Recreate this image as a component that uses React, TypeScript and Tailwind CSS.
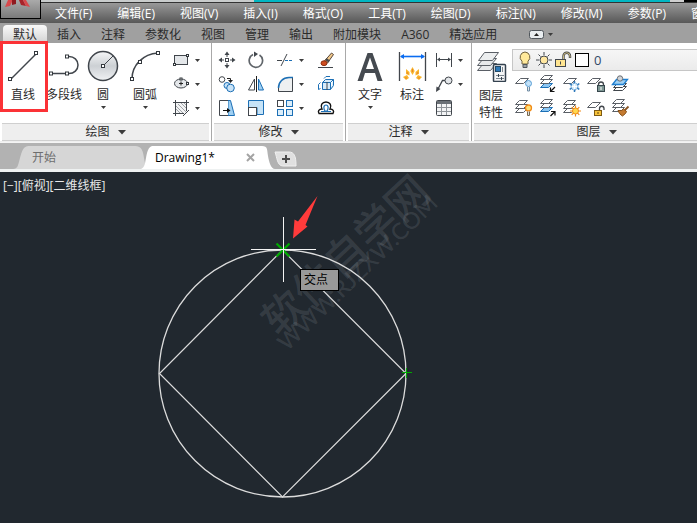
import type { ReactNode } from 'react';

const menus = ['文件(F)', '编辑(E)', '视图(V)', '插入(I)', '格式(O)', '工具(T)', '绘图(D)', '标注(N)', '修改(M)', '参数(P)', '窗口(W)'];
const ribbonTabs = ['默认', '插入', '注释', '参数化', '视图', '管理', '输出', '附加模块', 'A360', '精选应用'];

const INK = '#41464c';
const BLUE = '#1c6fb5';

function Icon({ children, size = 20 }: { children: ReactNode; size?: number }) {
  return (
    <svg width={size} height={size} viewBox={`0 0 ${size} ${size}`} fill="none" stroke={INK} className="block shrink-0" aria-hidden="true">
      {children}
    </svg>
  );
}

// Little square grip used on most drawing icons
function Grip({ x, y, r = 1.5 }: { x: number; y: number; r?: number }) {
  return <rect x={x - r} y={y - r} width={r * 2} height={r * 2} fill="#fff" stroke="#33383d" />;
}

function Caret({ big = false }: { big?: boolean }) {
  return big ? (
    <svg width="8" height="5" viewBox="0 0 8 5" className="block shrink-0" aria-hidden="true">
      <path d="M0 0h8L4 4.500z" fill="#3c3c3c" />
    </svg>
  ) : (
    <svg width="5" height="3" viewBox="0 0 5 3" className="block shrink-0" aria-hidden="true">
      <path d="M0 0h5L2.500 3z" fill="#3c3c3c" />
    </svg>
  );
}

interface BigButtonProps {
  label: string;
  width: string;
  caret?: boolean;
  children: ReactNode;
}

function BigButton({ label, width, caret, children }: BigButtonProps) {
  return (
    <button type="button" className={`flex shrink-0 flex-col items-center ${width}`}>
      {children}
      <span className="mt-[5px] whitespace-nowrap leading-4">{label}</span>
      {caret && (
        <span className="mt-[3px]">
          <Caret />
        </span>
      )}
    </button>
  );
}

function Tool({ name, caret, children }: { name: string; caret?: boolean; children: ReactNode }) {
  return (
    <button type="button" aria-label={name} className="flex h-6 items-center gap-1">
      <Icon>{children}</Icon>
      {caret && <Caret />}
    </button>
  );
}

function Panel({ title, className = '', children }: { title: string; className?: string; children: ReactNode }) {
  return (
    <section className={`flex shrink-0 flex-col border-r border-[#a9a9a9] bg-white ${className}`}>
      <div className="relative flex h-20 pt-[5px]">{children}</div>
      <button type="button" className="mx-0.5 flex h-[18px] items-center justify-center gap-2 border-y border-[#cfcfcf] bg-[#eeeeee]">
        {title}
        <Caret big />
      </button>
    </section>
  );
}

// Stack of sheets, the base of most layer icons
function Sheets({ x = 0, y = 0, accent = false }: { x?: number; y?: number; accent?: boolean }) {
  return (
    <g transform={`translate(${x} ${y})`} stroke="#5a5f66">
      <path d="M1.500 12.500l4-4h8l-4 4z" fill={accent ? '#8cc6f2' : '#fff'} stroke={accent ? BLUE : '#5a5f66'} />
      <path d="M1.500 8.500l4-4h8l-4 4z" fill="#fff" />
      <path d="M1.500 4.500l4-4h8l-4 4z" fill="#fff" />
    </g>
  );
}

function Sheet() {
  return <path d="M1.500 9.500l5-5h8l-5 5z" fill="#fff" stroke="#5a5f66" />;
}

function DrawPanel() {
  return (
    <Panel title="绘图" className="w-[212px]">
      <BigButton label="直线" width="w-[46px]">
        <Icon size={34}>
          <path d="M5 31L30 6" strokeWidth="1.500" />
          <Grip x={30} y={5} />
          <Grip x={4} y={31} />
        </Icon>
      </BigButton>
      <BigButton label="多段线" width="w-9">
        <Icon size={34}>
          <path d="M4 25.500h16M20 8.500h2c5 0 9 3.500 9 8.500s-4 8.500-9 8.500h-2" strokeWidth="1.500" />
          <Grip x={20} y={8.5} />
          <Grip x={4} y={25.5} />
          <Grip x={20} y={25.5} />
        </Icon>
      </BigButton>
      <BigButton label="圆" width="w-[42px]" caret>
        <Icon size={34}>
          <defs>
            <linearGradient id="disc" x1="0" y1="0" x2="0" y2="1">
              <stop offset="0" stopColor="#f6f7f8" />
              <stop offset="0.500" stopColor="#ccd0d4" />
              <stop offset="1" stopColor="#f0f2f4" />
            </linearGradient>
          </defs>
          <circle cx="17" cy="18" r="14.500" fill="url(#disc)" strokeWidth="1.500" />
          <path d="M17 18L27 8" />
          <Grip x={17} y={18} />
        </Icon>
      </BigButton>
      <BigButton label="圆弧" width="w-[42px]" caret>
        <Icon size={34}>
          <path d="M4 31C4 17 15 6 30 5" strokeWidth="1.500" />
          <Grip x={30} y={5} />
          <Grip x={12} y={14} />
          <Grip x={4} y={31} />
        </Icon>
      </BigButton>
      <div className="ml-[5px] flex flex-col">
        <Tool name="矩形" caret>
          <rect x="3.500" y="5.500" width="13" height="9" fill="#e4e7ea" />
          <Grip x={16.5} y={5.5} r={1} />
          <Grip x={3.5} y={14.5} r={1} />
        </Tool>
        <Tool name="椭圆" caret>
          <ellipse cx="10" cy="9.500" rx="6.500" ry="4.500" fill="#e4e7ea" />
          <path d="M8 9.500h4M10 7.500v4" stroke="#222" />
          <Grip x={10} y={5} r={1} />
          <Grip x={16.5} y={9.5} r={1} />
        </Tool>
        <Tool name="图案填充" caret>
          <rect x="4.500" y="4.500" width="11" height="11" fill="#f2f3f4" stroke="none" />
          <path d="M5 8l7 7M5 11l4 4M7 6l8 8M10 5l5 5M13 5l2 2" stroke="#8a8f94" strokeWidth="0.800" />
          <path d="M2 4.500h16M2 15.500h11M4.500 2v16M15.500 2v11M12 18l6-6" />
        </Tool>
      </div>
      <span className="pointer-events-none absolute -top-0.5 left-0 h-[71px] w-12 border-[3px] border-[#fb3236]" />
    </Panel>
  );
}

function ModifyPanel() {
  return (
    <Panel title="修改" className="w-[134px]">
      <div className="ml-[5px] grid grid-cols-[29px_29px_41px_20px] content-start">
        <Tool name="移动">
          <rect x="8.500" y="8.500" width="3" height="3" />
          <path d="M10 7V4M10 13v3M7 10H4M13 10h3" />
          <path d="M10 1.500L7.500 5h5zM10 18.500L7.500 15h5zM1.500 10L5 7.500v5zM18.500 10L15 7.500v5z" fill={INK} stroke="none" />
        </Tool>
        <Tool name="旋转">
          <path d="M13.500 5A6.700 6.700 0 1 1 7 4.600" stroke="#60656a" strokeWidth="1.700" />
          <path d="M8 1.500V7l4-3z" fill={INK} stroke="none" />
        </Tool>
        <Tool name="修剪" caret>
          <path d="M2 10.500h5M6 16l6-12" />
          <path d="M10 10.500h8" stroke={BLUE} strokeDasharray="3 1" />
        </Tool>
        <Tool name="删除">
          <path d="M2 17.500h15" />
          <path d="M8.500 11l7-8 2 1.500-6 8.500z" fill="#f2c98a" stroke="#57463a" />
          <path d="M9 10l1.500-2 3.500 2.500-1.500 2z" fill="#4a4a4a" stroke="none" />
          <ellipse cx="8" cy="13.200" rx="3" ry="2.400" fill="#cf4d20" stroke="#8d3112" />
        </Tool>
        <Tool name="复制">
          <circle cx="5" cy="5.500" r="2.800" />
          <path d="M10 4.500h3.500V7" stroke="#222" />
          <path d="M11 6h5l-2.500 3z" fill="#222" stroke="none" />
          <circle cx="10" cy="11.500" r="3" fill="#c9e3f7" stroke={BLUE} />
          <circle cx="13.500" cy="14" r="3.800" fill="#c9e3f7" stroke={BLUE} />
        </Tool>
        <Tool name="镜像">
          <path d="M8.500 5v11h-6z" />
          <path d="M10.500 2v16" stroke="#222" />
          <path d="M12.500 5v11h5z" fill="#9fd0f3" stroke={BLUE} />
        </Tool>
        <Tool name="圆角" caret>
          <path d="M3.500 17.500v-4a10 10 0 0 1 10-10h4v14z" fill="#eef0f1" stroke="none" />
          <path d="M17.500 4v13.500H3.500V14" />
          <path d="M3.500 14C3.500 8 8 3.500 14 3.500h4" stroke={BLUE} strokeWidth="1.500" />
        </Tool>
        <Tool name="分解">
          <path d="M6.500 8.500h8v7h-8zM6.500 8.500l3-3h8l-3 3M17.500 5.500v6l-3 4" fill="#d7ecfb" stroke={BLUE} />
          <path d="M4.500 8.500l-2 2v5l2-1M8 4.500l2-2h4" stroke={BLUE} />
          <path d="M11 8v8" stroke={INK} />
        </Tool>
        <Tool name="拉伸">
          <path d="M11 2.500h2.500l4 15H11z" fill="#9fd0f3" stroke={BLUE} />
          <path d="M11 2.500H2.500v15H11" fill="#fff" />
          <path d="M6 12.500h5" stroke="#111" />
          <path d="M10 10l3.500 2.500L10 15z" fill="#111" stroke="none" />
        </Tool>
        <Tool name="缩放">
          <path d="M2.500 2.500h15v14H11v-7H2.500z" fill="#c6e3f7" stroke={BLUE} />
          <rect x="2.500" y="9.500" width="8" height="8" fill="#fff" />
        </Tool>
        <Tool name="阵列" caret>
          <rect x="2.500" y="2.500" width="6" height="6" />
          <g fill="#dceefa" stroke={BLUE}>
            <rect x="11.500" y="2.500" width="6" height="6" />
            <rect x="2.500" y="11.500" width="6" height="6" />
            <rect x="11.500" y="11.500" width="6" height="6" />
          </g>
        </Tool>
        <Tool name="偏移">
          <path d="M3 15.500h14c1.500-2.500 0-4.500-3-4.500 2-3.500 0-7-4-7s-6 3.500-4 7c-3 0-4.500 2-3 4.500z" stroke="#111" strokeWidth="1.400" />
          <path d="M5 13.500h4.500c-2.500-2.500-2-6.500.5-6.500s3 4 .5 6.500H15" stroke={BLUE} strokeWidth="1.200" />
        </Tool>
      </div>
    </Panel>
  );
}

function AnnotatePanel() {
  return (
    <Panel title="注释" className="w-[126px]">
      <div className="ml-[3px] flex">
        <BigButton label="文字" width="w-[42px]" caret>
          <Icon size={34}>
            <path d="M14.500 5h5L29.500 33h-5l-2.500-8H12l-2.500 8h-5zM17 9.500L13 21h8z" fill="#454a50" stroke="none" />
          </Icon>
        </BigButton>
        <BigButton label="标注" width="w-[42px]">
          <Icon size={34}>
            <path d="M4.500 4v29M30.500 4v29" strokeWidth="1.300" />
            <path d="M6 8.500h23" stroke="#0a6cf0" strokeWidth="1.600" />
            <path d="M5 8.500L9 6v5zM30 8.500L26 6v5z" fill="#0a6cf0" stroke="none" />
            <g fill="#f9b52a" stroke="none">
              <path d="M17.500 19l2.200 4-2.200 4-2.200-4z" />
              <path d="M11 21l3.500 3v3.500L11 26z" />
              <path d="M24 21l-3.500 3v3.500L24 26z" />
              <path d="M8 29l4-2 2 3-3 2z" />
              <path d="M27 29l-4-2-2 3 3 2z" />
            </g>
            <path d="M17.500 21v3M12 24l1 2M23 24l-1 2M10 30h2M25 30h-2" stroke="#e8842a" />
          </Icon>
        </BigButton>
        <div className="ml-px flex flex-col">
          <Tool name="线性" caret>
            <path d="M2.500 3v14M17.500 3v14" />
            <path d="M4 9.500h12" />
            <path d="M3 9.500L6 7.500v4zM17 9.500L14 7.500v4z" fill={INK} stroke="none" />
          </Tool>
          <Tool name="引线" caret>
            <circle cx="14.500" cy="6.500" r="3.500" fill="#e4e7ea" />
            <path d="M11 6.500H8.500L4 15" strokeWidth="1.300" />
            <path d="M2 18l.5-5.500L6.500 15z" fill={INK} stroke="none" />
          </Tool>
          <Tool name="表格">
            <rect x="2.500" y="2.500" width="15" height="15" rx="1" fill="#f3f4f5" />
            <path d="M3 4.500h14" strokeWidth="3" stroke="#6a7076" />
            <path d="M3 9.500h14M3 13.500h14M7.500 6v11M12.500 6v11" stroke="#8f9499" />
          </Tool>
        </div>
      </div>
    </Panel>
  );
}

function LayerPanel() {
  return (
    <Panel title="图层" className="min-w-[249px] flex-1 border-r-0">
      <button type="button" className="flex w-[38px] shrink-0 flex-col items-center">
        <Icon size={34}>
          <g stroke="#5a5f66">
            <path d="M3.500 22.500l6-7h13l-6 7z" fill="#e6e8ea" />
            <path d="M3.500 17.500l6-7h13l-6 7z" fill="#e6e8ea" />
            <path d="M4.500 12.500l6-8h14l-6 8z" fill="#eceeef" />
          </g>
          <rect x="19.500" y="16.500" width="12" height="17" rx="1" fill="#f4f5f6" stroke="#34424f" strokeWidth="1.500" />
          <rect x="21.500" y="18.500" width="5" height="5" fill="#2c78b8" stroke="#244a66" />
          <path d="M28.500 19v5M22 27.500h8M22 30.500h8" stroke="#7c868e" />
          <path d="M24.500 26v3M27.500 29v3" stroke="#34424f" />
        </Icon>
        <span className="mt-[5px] w-6 leading-[17px]">图层特性</span>
      </button>
      <div className="flex flex-1 flex-col">
        <div className="ml-0.5 mt-px flex h-[22px] items-center border border-r-0 border-[#c6c6c6] bg-linear-to-b from-[#f6f6f6] to-[#ebebeb] pl-0.5">
          <Icon>
            <path d="M10 2a5.200 5.200 0 0 0-3 9.200V14h6v-2.800A5.200 5.200 0 0 0 10 2z" fill="#ffe99a" stroke="#6c5f3e" />
            <path d="M8 14.500h4v3H8z" fill="#9da3a8" stroke="#50565c" />
          </Icon>
          <Icon>
            <circle cx="9" cy="10" r="4" fill="#ffe7a0" />
            <path d="M9 2v3M9 15v3M1 10h3M14 10h3M3.500 4.500l2 2M12.500 13.500l2 2M14.500 4.500l-2 2M5.500 13.500l-2 2" />
          </Icon>
          <Icon>
            <path d="M8.500 9V6a3 3 0 0 1 6.500 0v2" stroke="#43464a" strokeWidth="2.400" />
            <path d="M8.500 9V6a3 3 0 0 1 6.500 0v1.500" stroke="#ecd58c" strokeWidth="0.800" />
            <rect x="0.500" y="9.500" width="10" height="7" fill="#ffe591" />
            <path d="M5.500 11.500v3" />
          </Icon>
          <span className="h-3.5 w-3.5 border border-black bg-white" />
          <select aria-label="当前图层" className="ml-[5px] flex-1 appearance-none bg-transparent text-[13px] text-[#334866]">
            <option>0</option>
          </select>
        </div>
        <div className="ml-1 mt-px grid grid-cols-[repeat(5,24px)]">
          <Tool name="关闭图层">
            <Sheet />
            <circle cx="14.500" cy="9.500" r="3" fill="#c4e2f8" stroke="#5b9fd6" />
            <path d="M13.500 13v4h2v-4" fill="#dfe7ed" stroke="#6f8ba3" />
          </Tool>
          <Tool name="隔离图层">
            <Sheets x={1} y={1} accent />
            <path d="M17 13l-4 4M12.500 13.500V17.500h4" stroke="#111" strokeWidth="1.200" />
          </Tool>
          <Tool name="冻结图层">
            <Sheet />
            <path d="M12.500 7v11M7.700 9.700l9.600 5.600M17.300 9.700l-9.600 5.600" stroke="#2c78bb" strokeWidth="1.500" />
            <circle cx="12.500" cy="12.500" r="3.500" fill="#d6ecfb" stroke="#2c78bb" strokeDasharray="2.600 1" />
            <path d="M12.500 10v5M10 12.500h5" stroke="#fff" />
          </Tool>
          <Tool name="锁定图层">
            <Sheet />
            <path d="M12.500 12v-1.500a2.500 2.500 0 0 1 5 0V12" strokeWidth="1.300" />
            <rect x="11.500" y="11.500" width="7" height="6" fill="#7d9693" stroke="#36464c" />
            <path d="M15 13v3" stroke="#fff" />
          </Tool>
          <Tool name="置为当前">
            <g stroke="#41464c" fill="#fff">
              <path d="M3.500 16.500l4-4h9l-4 4z" />
              <path d="M3.500 13.500l4-4h9l-4 4z" />
            </g>
            <path d="M2.500 10.500l4-5h11l-4 5z" fill="#9fd0f3" stroke="#1f7fd0" strokeWidth="1.300" />
            <circle cx="10" cy="4.500" r="2.700" fill="#d0d4d8" stroke="#6a7076" />
          </Tool>
          <Tool name="打开所有图层">
            <Sheets y={2} />
            <circle cx="14.500" cy="10" r="3" fill="#ffe27a" stroke="#f08a18" strokeWidth="1.300" />
            <path d="M13.500 13.500v4h2v-4" fill="#d8dde1" stroke="#7a6a50" />
          </Tool>
          <Tool name="取消隔离">
            <Sheets x={1} y={1} accent />
            <path d="M12.500 18l4-4M13 13.500h4V17.500" stroke="#111" strokeWidth="1.200" />
          </Tool>
          <Tool name="解冻所有图层">
            <Sheets y={2} />
            <path d="M13.500 7.500v11M8 13h11M9.700 9.200l7.600 7.600M17.300 9.200l-7.600 7.600" stroke="#f08a18" strokeWidth="1.200" />
            <circle cx="13.500" cy="13" r="3" fill="#ffd84d" stroke="#f08a18" />
          </Tool>
          <Tool name="解锁图层">
            <Sheet />
            <path d="M13.500 13v-2.500a2.200 2.200 0 0 1 4.500 0V12" strokeWidth="1.300" />
            <rect x="8.500" y="12.500" width="7" height="5" fill="#f7c33a" stroke="#7d5a14" />
            <path d="M12 14v2" stroke="#5d4310" />
          </Tool>
          <Tool name="图层匹配">
            <Sheets x={1} y={1} />
            <path d="M18.500 8.500l-4 4" stroke="#8a5522" strokeWidth="1.800" />
            <path d="M8 12.500h3.500l2-1.500 3 2.500-1 2-3 2.500c-2-1-3.500-3-4.500-5.500z" fill="#c47a30" stroke="#855019" />
          </Tool>
        </div>
      </div>
    </Panel>
  );
}

function DocumentTabs() {
  return (
    <nav className="flex h-[26px] items-end bg-[#b2b2b2] pl-[13px] pt-0.5">
      <button type="button" className="flex h-6 items-center text-[#6e6e6e]">
        <svg width="16" height="24" viewBox="0 0 16 24" className="block" aria-hidden="true">
          <path d="M0 24c5 0 5-4 7-11S10 1 16 1v23z" fill="#d6d6d6" />
        </svg>
        <span className="-ml-px mt-px flex h-[23px] w-[108px] items-center bg-[#d6d6d6] pl-1">开始</span>
        <svg width="16" height="24" viewBox="0 0 16 24" className="-ml-px block" aria-hidden="true">
          <path d="M0 1c7 0 8 5 9 12s3 11 7 11H0z" fill="#d6d6d6" />
        </svg>
      </button>
      <div className="relative -ml-2.5 flex h-6 items-center">
        <svg width="12" height="24" viewBox="0 0 12 24" className="block" aria-hidden="true">
          <path d="M0 24c4-2 4-6 5-11S7 1 12 1v23z" fill="#fff" />
        </svg>
        <div className="-ml-px mt-px flex h-[23px] w-[109px] items-center justify-between bg-white pl-[3px] pr-1.5">
          <button type="button" className="text-black">
            Drawing1*
          </button>
          <button type="button" aria-label="关闭">
            <svg width="9" height="9" viewBox="0 0 9 9" className="block" aria-hidden="true">
              <path d="M1 1l7 7M8 1L1 8" stroke="#a4a4a4" strokeWidth="2" />
            </svg>
          </button>
        </div>
        <svg width="18" height="24" viewBox="0 0 18 24" className="-ml-px block" aria-hidden="true">
          <path d="M0 1h2c6 0 5 4 6 10s3 13 7 13H0z" fill="#fff" />
        </svg>
      </div>
      <button type="button" aria-label="新图形" className="-ml-1 mb-0.5">
        <svg width="24" height="16" viewBox="0 0 24 16" className="block" aria-hidden="true">
          <path d="M1 1h14c5 0 7 4 7 13v1H9C3 15 3 6 1 1z" fill="#e0e0e0" stroke="#f0f0f0" />
          <path d="M12 4v8M8 8h8" stroke="#4c4c4c" strokeWidth="2" />
        </svg>
      </button>
    </nav>
  );
}

function DrawingArea() {
  return (
    <main className="relative min-h-[351px] flex-1 overflow-hidden bg-[#21282f]">
      <svg width="697" height="351" viewBox="0 0 697 351" fill="none" className="absolute left-0 top-0" aria-hidden="true">
        <g fill="#9ea3a9" fillOpacity="0.180">
          <text transform="translate(279 166) rotate(-43)" fontSize="42" fontWeight="500" className="font-['Noto_Sans_CJK_SC',sans-serif]">
            软件自学网
          </text>
          <text transform="translate(287 180) rotate(-44)" fontSize="23" fontWeight="500" className="font-[Lato,sans-serif]">
            WWW.RJZXW.COM
          </text>
        </g>
        <circle cx="282.500" cy="201.500" r="123.500" stroke="#dcdcdc" strokeWidth="1.300" />
        <path d="M282.500 78L159.500 201.500L282.500 325L406 201.500Z" stroke="#dcdcdc" strokeWidth="1.200" />
        <path d="M276.500 71.500l13 13M289.500 71.500l-13 13" stroke="#00a800" strokeWidth="2.200" />
        <path d="M251 77.500h65M283.500 45v65" stroke="#f4f4f4" />
        <path d="M402 200.500h10M406.500 196v10" stroke="#00a800" />
        <path d="M317.500 24L305.500 53l2 1.500L293 66.500l1.500-19 3.500 2z" fill="#ff3b3b" />
      </svg>
      <div className="absolute left-[3px] top-1.5 leading-4 text-[#e8e8e8]">[−][俯视][二维线框]</div>
      <div className="absolute left-[300px] top-[97px] flex h-[22px] w-[39px] items-center border border-black bg-[#999999] pl-[3px] text-black">
        交点
      </div>
    </main>
  );
}

export default function App() {
  return (
    <div className="flex min-h-screen flex-col overflow-hidden bg-[#b2b2b2] font-['Open_Sans','Noto_Sans_CJK_SC',sans-serif] text-xs leading-none text-[#2b2b2b]">
      <header className="relative">
        <div className="flex h-[3px] border-b border-[#333]">
          <span className="w-[254px] bg-[#c9cccc]" />
          <span className="flex-1 bg-[#00b7c3]" />
          <span className="w-3.5 bg-[#cfcfcf]" />
          <span className="w-[13px] bg-black" />
        </div>
        <nav className="flex h-5 items-center gap-[25px] overflow-hidden bg-linear-to-b from-[#999999] to-[#585858] pl-[55px] pt-0.5 text-white">
          {menus.map((menu) => (
            <button key={menu} type="button" className="shrink-0">
              {menu}
            </button>
          ))}
        </nav>
        <button type="button" aria-label="应用程序菜单" className="absolute left-0 top-0 h-[19px] w-[41px] border border-t-0 border-black bg-linear-to-b from-[#aaaaaa] to-[#7b7b7b]">
          <svg width="39" height="18" viewBox="0 0 39 18" className="-mt-px block" aria-hidden="true">
            <path d="M7 0h5L9 6l-5 1z" fill="#d8494c" />
            <path d="M11 0h4v4l-4 1z" fill="#8f1a20" />
            <path d="M18 0h4l3 6-5-1z" fill="#a8242a" />
            <path d="M22 0h3l4 7-4-1z" fill="#d8494c" />
          </svg>
        </button>
        <nav className="flex h-5 items-end bg-[#a0a0a0] pl-[3px]">
          {ribbonTabs.map((tab, i) => (
            <button
              key={tab}
              type="button"
              className={`h-[18px] shrink-0 px-2.5 pt-0.5 ${i === 0 ? 'rounded-t-sm bg-linear-to-b from-[#fafafa] to-[#d2d2d2]' : ''}`}
            >
              {tab}
            </button>
          ))}
          <button type="button" aria-label="最小化功能区" className="ml-[22px] flex h-[18px] items-center gap-1">
            <svg width="15" height="9" viewBox="0 0 15 9" className="block" aria-hidden="true">
              <rect x="0.500" y="0.500" width="14" height="8" rx="2" fill="#e9edf0" stroke="#50565c" />
              <path d="M5 6l2.500-3L10 6z" fill="#222" />
            </svg>
            <Caret />
          </button>
        </nav>
      </header>
      <div className="flex border-b border-[#f4f4f4] bg-[#efefef] pb-px">
        <DrawPanel />
        <ModifyPanel />
        <AnnotatePanel />
        <LayerPanel />
      </div>
      <DocumentTabs />
      <div className="h-[3px] bg-[#eef1f1]" />
      <DrawingArea />
    </div>
  );
}
